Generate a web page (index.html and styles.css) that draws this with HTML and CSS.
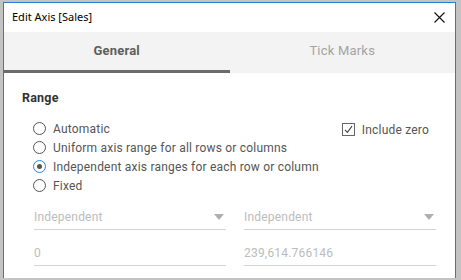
FILE: index.html
```html
<!DOCTYPE html>
<html lang="en">
<head>
	<meta charset="UTF-8">
	<title>Edit Axis [Sales]</title>
	<link rel="stylesheet" href="styles.css">
</head>
<body>
<div class="dialog">
	<div class="titlebar">
		<span class="title">Edit Axis [Sales]</span>
		<svg class="close" width="11" height="11" viewBox="0 0 11 11">
			<path d="M0.5 0.5 L10.5 10.5 M10.5 0.5 L0.5 10.5" stroke="#111" stroke-width="1.1" fill="none"/>
		</svg>
	</div>
	<div class="tabs">
		<div class="tab active">General</div>
		<div class="tab">Tick Marks</div>
	</div>
	<div class="content">
		<div class="section-title">Range</div>
		<div class="range-row">
			<div class="options">
				<div class="option"><span class="radio"></span>Automatic</div>
				<div class="option"><span class="radio"></span>Uniform axis range for all rows or columns</div>
				<div class="option"><span class="radio checked"></span>Independent axis ranges for each row or column</div>
				<div class="option"><span class="radio"></span>Fixed</div>
			</div>
			<div class="include-zero">
				<span class="checkbox">
					<svg width="9" height="9" viewBox="0 0 9 9"><path d="M1 4.8 L3.4 7.4 L8 1.2" stroke="#444" stroke-width="1.1" fill="none"/></svg>
				</span>
				Include zero
			</div>
		</div>
		<div class="fields">
			<div class="select">Independent<span class="arrow"></span></div>
			<div class="select">Independent<span class="arrow"></span></div>
			<div class="field">0</div>
			<div class="field">239,614.766146</div>
		</div>
	</div>
</div>
</body>
</html>
```
FILE: styles.css
```css
body {
	margin: 0;
	padding: 2px 5px 0 3px;
	background: #c3c3c3;
	height: 280px;
	box-sizing: border-box;
	overflow: hidden;
}
.dialog {
	height: 276px;
	background: #fff;
	border: 1px solid #2b7bd6;
	border-bottom: none;
	box-sizing: border-box;
}
.titlebar {
	height: 29px;
	display: flex;
	align-items: center;
	justify-content: space-between;
	padding: 0 10px 0 8px;
	font: 11px "Noto Sans", "Open Sans", sans-serif;
	color: #000;
}
.title {
	margin-top: -2px;
}
.tabs {
	display: grid;
	grid-template-columns: 1fr 1fr;
	height: 41px;
	background: #f3f3f3;
}
.tab {
	display: flex;
	align-items: center;
	justify-content: center;
	padding-bottom: 2px;
	font: 13px Roboto, sans-serif;
	letter-spacing: 0.2px;
	color: #a3a3a3;
	border-bottom: 3px solid transparent;
}
.tab.active {
	font-weight: bold;
	color: #5e5e5e;
	border-bottom-color: #6b6b6b;
}
.content {
	padding: 17px 19px 0 18px;
	font: 12px Roboto, sans-serif;
	letter-spacing: 0.2px;
	color: #555;
}
.section-title {
	font-weight: bold;
	font-size: 12.5px;
	color: #333;
	line-height: 16px;
}
.range-row {
	display: flex;
	justify-content: space-between;
	margin-top: 13px;
}
.options {
	padding-left: 11px;
}
.option {
	display: flex;
	align-items: center;
	height: 19px;
}
.radio {
	width: 11px;
	height: 11px;
	border: 1px solid #555;
	border-radius: 50%;
	margin-right: 7px;
	display: flex;
	align-items: center;
	justify-content: center;
}
.radio.checked {
	border-color: #2d83e0;
}
.radio.checked:after {
	content: "";
	width: 5px;
	height: 5px;
	border-radius: 50%;
	background: #555;
}
.include-zero {
	display: flex;
	align-items: center;
	height: 19px;
	margin-right: 7px;
	margin-top: 1px;
}
.checkbox {
	width: 11px;
	height: 11px;
	border: 1px solid #666;
	margin-right: 7px;
	display: flex;
	align-items: center;
	justify-content: center;
}
.fields {
	display: grid;
	grid-template-columns: 1fr 1fr;
	column-gap: 18px;
	row-gap: 12px;
	margin: 11px 0 0 12px;
}
.select, .field {
	height: 24px;
	display: flex;
	align-items: center;
	justify-content: space-between;
	border-bottom: 1px solid #d4d4d4;
	color: #bcbcbc;
	padding-bottom: 1px;
	box-sizing: border-box;
}
.arrow {
	width: 0;
	height: 0;
	border-left: 5px solid transparent;
	border-right: 5px solid transparent;
	border-top: 6px solid #b0b0b0;
	margin-right: 2px;
}
```
